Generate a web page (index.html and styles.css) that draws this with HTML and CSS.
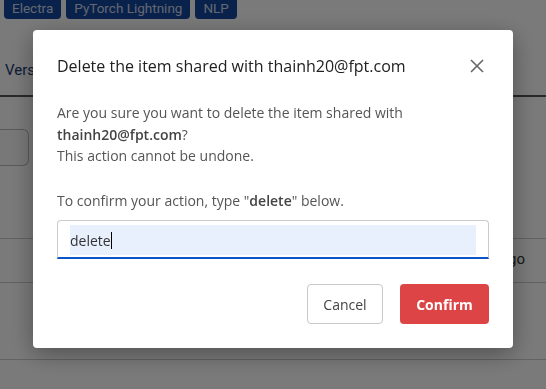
FILE: index.html
```html
<!DOCTYPE html>
<html>
<head>
<meta charset="utf-8">
<link rel="stylesheet" href="styles.css">
</head>
<body>
<div class="page">
  <div class="tags">
    <span class="tag">Electra</span>
    <span class="tag">PyTorch Lightning</span>
    <span class="tag">NLP</span>
  </div>
  <div class="tabs"><span class="tab">Versions</span></div>
  <div class="toolbar"><div class="search"></div></div>
  <div class="table">
    <div class="row r1"><span class="cell-right">ago</span></div>
    <div class="row r2"></div>
    <div class="row r3"></div>
  </div>
</div>
<div class="overlay">
  <div class="modal">
    <div class="modal-header">
      <h2 class="modal-title">Delete the item shared with thainh20@fpt.com</h2>
      <button class="close" aria-label="Close">
        <svg width="14" height="14" viewBox="0 0 14 14"><path d="M1 1L13 13M13 1L1 13" stroke="#666" stroke-width="1.6" fill="none"/></svg>
      </button>
    </div>
    <div class="modal-body">
      <p class="msg">Are you sure you want to delete the item shared with <b>thainh20@fpt.com</b>?<br>This action cannot be undone.</p>
      <p class="msg confirm-text">To confirm your action, type "<b>delete</b>" below.</p>
      <div class="input"><div class="input-fill">delete<span class="caret"></span></div></div>
    </div>
    <div class="modal-footer">
      <button class="btn btn-cancel">Cancel</button>
      <button class="btn btn-confirm">Confirm</button>
    </div>
  </div>
</div>
</body>
</html>
```
FILE: styles.css
```css
html, body { margin: 0; padding: 0; }
body { background: #fff; font-family: "Open Sans", "Liberation Sans", sans-serif; width: 546px; height: 389px; overflow: hidden; }
.page { font-family: Roboto, "Liberation Sans", sans-serif; }
.tags { display: flex; gap: 5px; padding-left: 4px; margin-top: -3px; height: 22px; }
.tag { background: #14479f; color: #cfd9ea; font-size: 13.5px; line-height: 22px; padding: 0 8px; border-radius: 4px; }
.tabs { height: 78px; border-bottom: 2px solid #555; box-sizing: border-box; padding: 42px 0 0 5px; }
.tab { display: inline-block; width: 28px; overflow: hidden; white-space: nowrap; vertical-align: top; font-size: 15px; color: #1b3a72; }
.toolbar { padding: 32px 0 0 0; height: 141px; box-sizing: border-box; }
.search { width: 29px; height: 37px; border: 1px solid #bbb; border-left: none; border-radius: 0 6px 6px 0; box-sizing: border-box; background: #fafafa; }
.row { border-bottom: 1px solid #ccc; position: relative; }
.r1 { height: 43px; border-top: 1px solid #ccc; }
.cell-right { position: absolute; right: 21px; top: 11px; font-size: 15px; color: #333; }
.r2 { height: 76px; }
.r3 { height: 30px; border-bottom: none; }

.overlay { position: fixed; inset: 0; background: rgba(0,0,0,0.52); display: flex; justify-content: center; align-items: flex-start; padding-top: 30px; }
.modal { width: 480px; background: #fff; border-radius: 4px; box-shadow: 0 6px 24px rgba(0,0,0,0.35); box-sizing: border-box; padding: 0 24px; }
.modal-header { display: flex; align-items: center; justify-content: space-between; height: 72px; }
.modal-title { margin: 0; font-size: 16px; font-weight: 500; color: #212121; }
.close { background: none; border: none; padding: 0; margin-right: 5px; width: 14px; height: 14px; display: flex; }
.msg { margin: 0; font-size: 14px; line-height: 21.5px; color: #555; }
.msg b { font-weight: 600; color: #444; }
.confirm-text { margin-top: 23px; }
.input { margin-top: 9px; height: 39px; border: 1px solid #ccc; border-bottom: 2px solid #0b55c8; border-radius: 4px 4px 0 0; box-sizing: border-box; padding: 4px 12px 2px 12px; }
.input-fill { background: #e8f0fe; height: 100%; font-size: 14px; color: #333; display: flex; align-items: center; }
.caret { display: inline-block; width: 1px; height: 17px; background: #000; }
.modal-footer { display: flex; justify-content: flex-end; gap: 17px; padding: 25px 0 24px; }
.btn { height: 40px; border-radius: 4px; font-family: "Open Sans", sans-serif; font-size: 14px; box-sizing: border-box; }
.btn-cancel { width: 76px; background: #fff; border: 1px solid #c8c8c8; color: #444; }
.btn-confirm { width: 89px; background: #dc4446; border: none; color: #fff; font-weight: 700; }
```
